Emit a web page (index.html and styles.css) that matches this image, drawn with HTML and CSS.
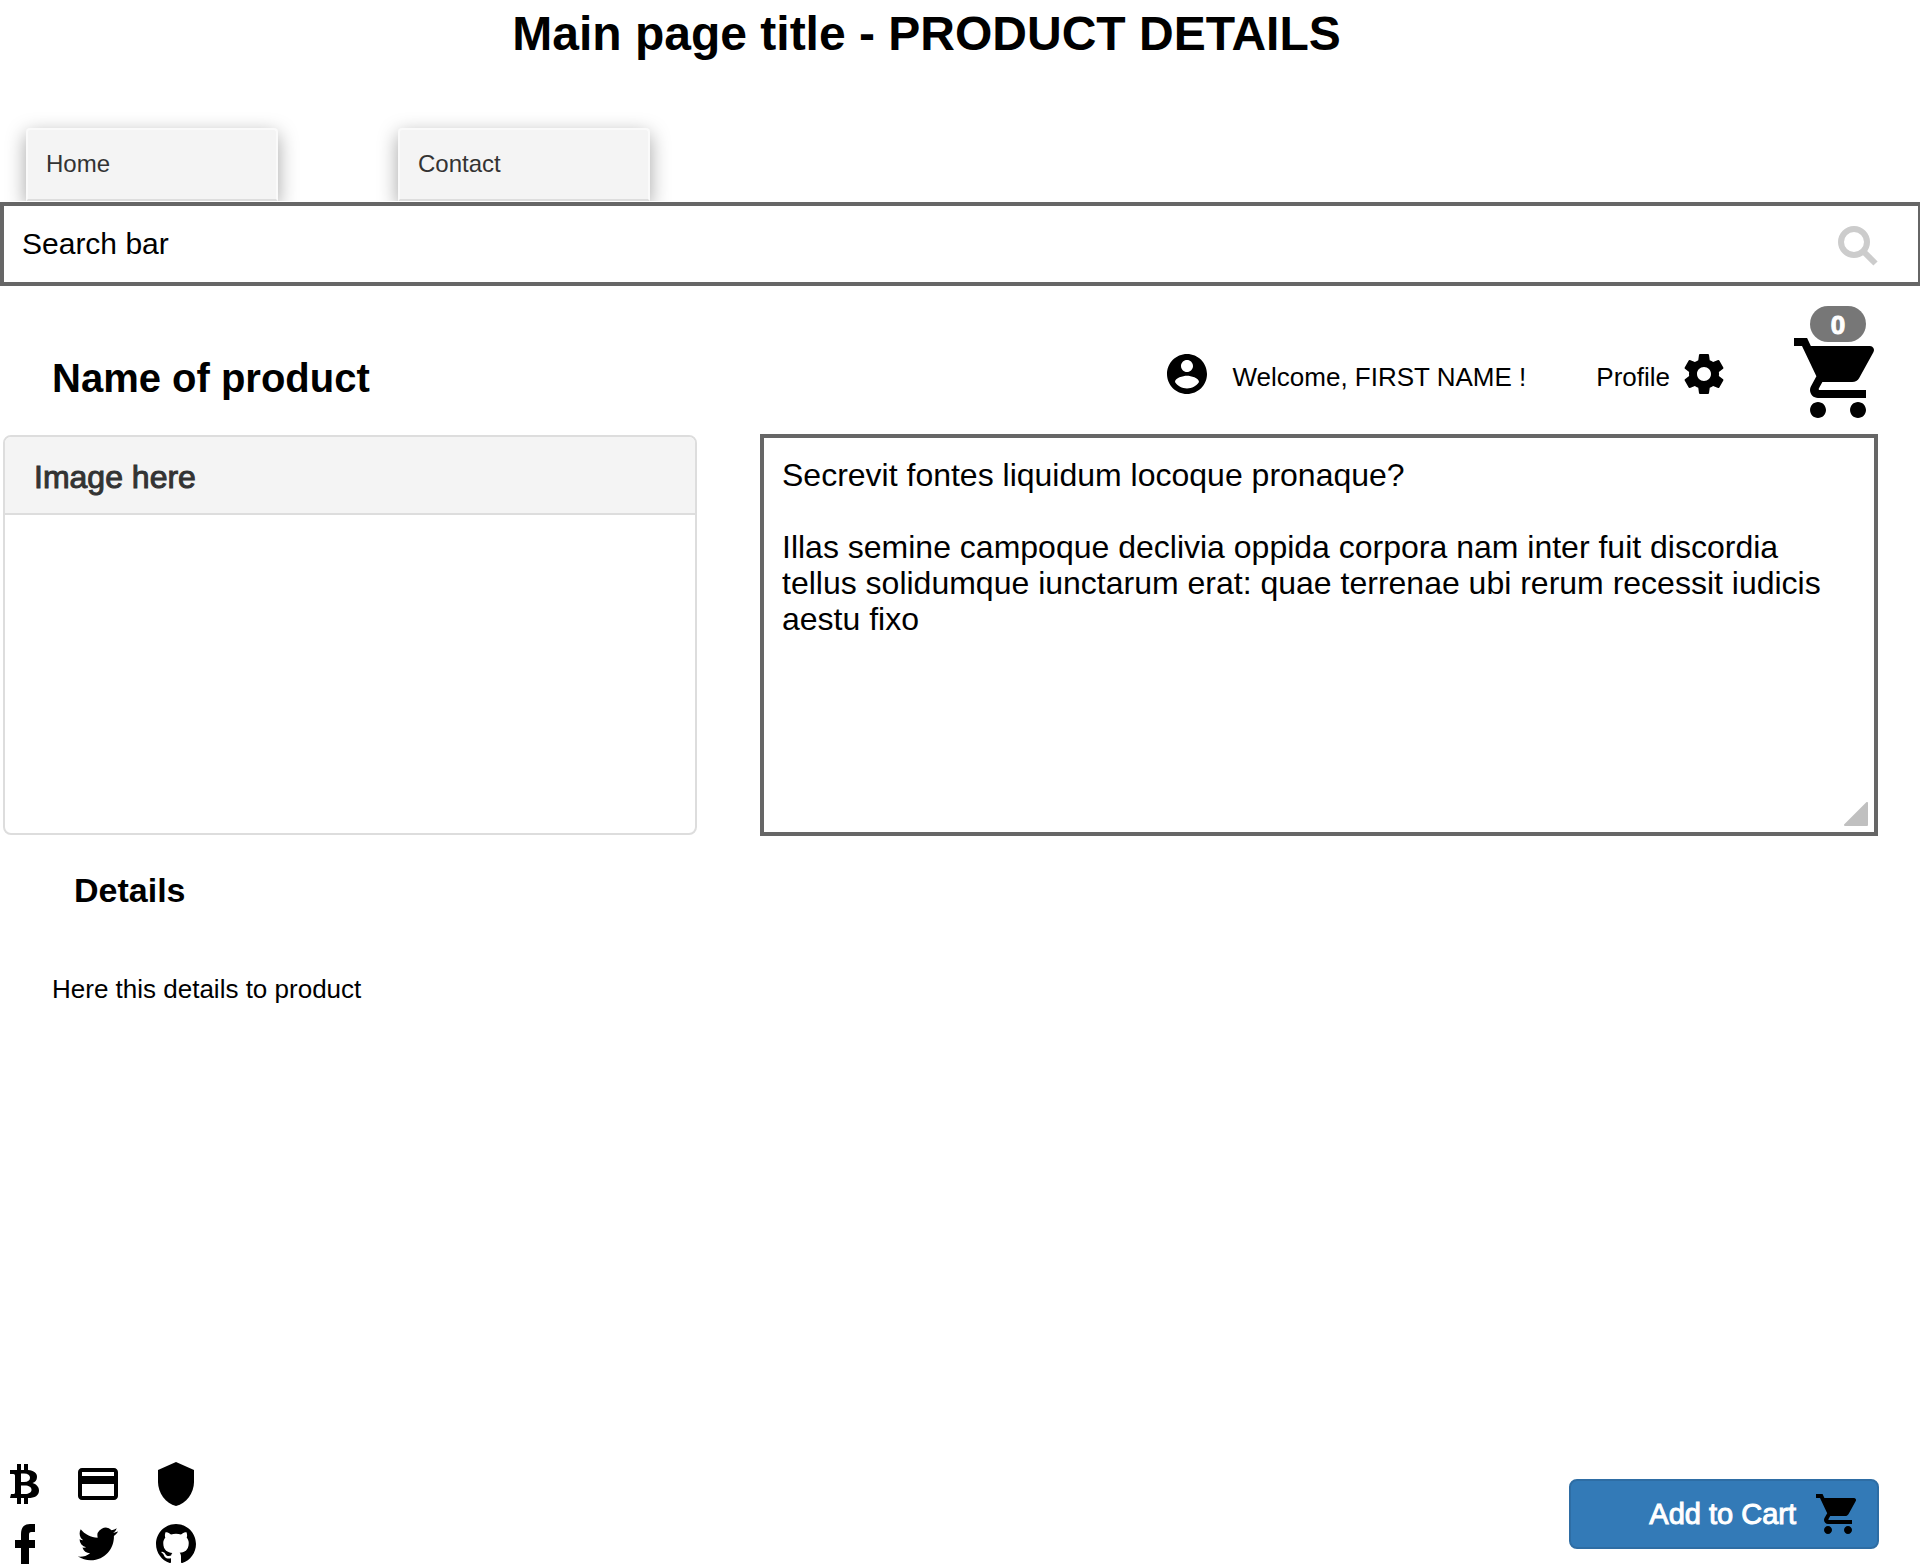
FILE: index.html
```html
<!DOCTYPE html>
<html lang="en">
<head>
  <meta charset="utf-8">
  <meta name="viewport" content="width=device-width, initial-scale=1">
  <title>Product details</title>
  <link rel="stylesheet" href="styles.css">
</head>
<body>
  <svg class="sprite" aria-hidden="true">
    <symbol id="cart" viewBox="0 0 24 24"><path d="M7 18c-1.1 0-1.99.9-1.99 2S5.9 22 7 22s2-.9 2-2-.9-2-2-2zM1 2v2h2l3.6 7.59-1.35 2.45c-.16.28-.25.61-.25.96 0 1.1.9 2 2 2h12v-2H7.42c-.14 0-.25-.11-.25-.25l.03-.12.9-1.63h7.45c.75 0 1.41-.41 1.75-1.03l3.58-6.49A1.003 1.003 0 0 0 20 4H5.21l-.94-2H1zm16 16c-1.1 0-1.99.9-1.99 2s.89 2 1.99 2 2-.9 2-2-.9-2-2-2z"/></symbol>
  </svg>

  <h1 class="page-title">Main page title - PRODUCT DETAILS</h1>

  <nav class="tabs">
    <a class="tab" href="#home">Home</a>
    <a class="tab" href="#contact">Contact</a>
  </nav>

  <form class="search" role="search">
    <input class="search-input" type="text" aria-label="Search" value="Search bar">
    <button class="search-button" type="button" aria-label="Search">
      <svg class="search-icon" viewBox="0 0 40 40"><circle cx="16" cy="16" r="13"/><path d="M25 25 37.500 37.500"/></svg>
    </button>
  </form>

  <main class="content">
    <header class="product-header">
      <h2 class="product-name">Name of product</h2>
      <div class="account">
        <svg class="icon" viewBox="0 0 24 24" aria-hidden="true"><path d="M12 2C6.480 2 2 6.480 2 12s4.480 10 10 10 10-4.480 10-10S17.520 2 12 2zm0 3c1.660 0 3 1.340 3 3s-1.340 3-3 3-3-1.340-3-3 1.340-3 3-3zm0 14.200c-2.500 0-4.710-1.280-6-3.220.03-1.990 4-3.080 6-3.080 1.990 0 5.970 1.090 6 3.080-1.290 1.940-3.500 3.220-6 3.220z"/></svg>
        <span class="account-label">Welcome, FIRST NAME !</span>
      </div>
      <a class="profile" href="#profile">
        <span class="account-label">Profile</span>
        <svg class="icon" viewBox="0 0 24 24" aria-hidden="true"><path d="M19.430 12.980c.04-.32.07-.64.07-.98s-.03-.66-.07-.98l2.110-1.650c.19-.15.24-.42.12-.64l-2-3.460c-.12-.22-.39-.3-.61-.22l-2.490 1c-.52-.4-1.080-.73-1.690-.98l-.38-2.650C14.460 2.180 14.250 2 14 2h-4c-.25 0-.46.18-.49.42l-.38 2.650c-.61.25-1.170.59-1.690.98l-2.490-1c-.23-.09-.49 0-.61.22l-2 3.460c-.13.22-.07.49.12.64l2.110 1.650c-.04.32-.07.65-.07.98s.03.66.07.98l-2.110 1.650c-.19.15-.24.42-.12.64l2 3.460c.12.22.39.3.61.22l2.490-1c.52.4 1.080.73 1.690.98l.38 2.650c.03.24.24.42.49.42h4c.25 0 .46-.18.49-.42l.38-2.650c.61-.25 1.170-.59 1.690-.98l2.490 1c.23.09.49 0 .61-.22l2-3.460c.12-.22.07-.49-.12-.64l-2.110-1.650zM12 15.500c-1.930 0-3.500-1.570-3.500-3.500s1.570-3.500 3.500-3.500 3.500 1.570 3.500 3.500-1.570 3.500-3.500 3.500z"/></svg>
      </a>
      <a class="cart" href="#cart-page" aria-label="Cart">
        <svg class="cart-icon"><use href="#cart"/></svg>
        <span class="badge">0</span>
      </a>
    </header>

    <section class="product">
      <div class="panel">
        <h3 class="panel-title">Image here</h3>
      </div>
      <div class="description">
        <textarea class="description-text" aria-label="Description">Secrevit fontes liquidum locoque pronaque?

Illas semine campoque declivia oppida corpora nam inter fuit discordia tellus solidumque iunctarum erat: quae terrenae ubi rerum recessit iudicis aestu fixo</textarea>
        <svg class="grip" viewBox="0 0 24 24" aria-hidden="true"><path d="M1 23 23 1V23Z"/></svg>
      </div>
    </section>

    <section class="details">
      <h3 class="details-title">Details</h3>
      <p class="details-text">Here this details to product</p>
    </section>
  </main>

  <footer class="footer">
    <div class="links">
      <a class="link" href="#bitcoin" aria-label="Bitcoin"><svg class="glyph" viewBox="0 0 29 40"><path fill-rule="evenodd" d="M7 0h4v6h3V0h4v6c6 .5 9 3 9 7 0 3.500-2 5-4.500 6 3.500 1 6.500 3.500 6.500 7.500 0 5-4 7.500-11 7.500v6h-4v-6h-3v6H7v-6H0l1-4h2.500Q5 30 5 28.500v-17Q5 10 3.500 10H0V6h7zM11 9.500v8.500h3c4 0 6-1.500 6-4.200s-2-4.300-6-4.300zM11 21.500v8.500h4c4 0 6.500-1.500 6.500-4.200s-2.500-4.300-6.500-4.300z"/></svg></a>
      <a class="link" href="#card" aria-label="Credit card"><svg class="icon" viewBox="0 0 24 24"><path d="M20 4H4c-1.110 0-1.990.89-1.990 2L2 18c0 1.110.89 2 2 2h16c1.110 0 2-.89 2-2V6c0-1.110-.89-2-2-2zm0 14H4v-6h16v6zm0-10H4V6h16v2z"/></svg></a>
      <a class="link" href="#security" aria-label="Security"><svg class="icon" viewBox="0 0 24 24"><path d="M12 1L3 5v6c0 5.550 3.840 10.740 9 12 5.160-1.260 9-6.450 9-12V5l-9-4z"/></svg></a>
      <a class="link" href="#facebook" aria-label="Facebook"><svg class="glyph" viewBox="0 0 20 40"><path d="M20 0v8h-3.500C14.400 8 14 9 14 11v5h6v8h-6v16H6V24H0v-8h6v-6C6 3.500 9 0 15 0z"/></svg></a>
      <a class="link" href="#twitter" aria-label="Twitter"><svg class="glyph" viewBox="0 0 24 24"><path d="M23.953 4.570a10 10 0 0 1-2.825.775 4.958 4.958 0 0 0 2.163-2.723c-.951.555-2.005.959-3.127 1.184a4.920 4.920 0 0 0-8.384 4.482C7.690 8.095 4.067 6.130 1.640 3.162a4.822 4.822 0 0 0-.666 2.475c0 1.710.87 3.213 2.188 4.096a4.904 4.904 0 0 1-2.228-.616v.06a4.923 4.923 0 0 0 3.946 4.827 4.996 4.996 0 0 1-2.212.085 4.936 4.936 0 0 0 4.604 3.417 9.867 9.867 0 0 1-6.102 2.105c-.39 0-.779-.023-1.170-.067a13.995 13.995 0 0 0 7.557 2.209c9.053 0 13.998-7.496 13.998-13.985 0-.21 0-.42-.015-.63A9.935 9.935 0 0 0 24 4.590z"/></svg></a>
      <a class="link" href="#github" aria-label="GitHub"><svg class="glyph" viewBox="70 70 372 372"><path d="M256 70.700c-102.600 0-185.900 83.200-185.900 185.900 0 82.100 53.300 151.800 127.100 176.400 9.300 1.700 12.300-4 12.300-8.900V389.400c-51.700 11.300-62.500-21.900-62.500-21.900-8.400-21.500-20.600-27.200-20.600-27.200-16.900-11.500 1.300-11.300 1.300-11.300 18.700 1.300 28.500 19.200 28.500 19.200 16.600 28.400 43.500 20.200 54.100 15.400 1.700-12 6.500-20.200 11.800-24.900-41.300-4.700-84.700-20.600-84.700-91.900 0-20.300 7.300-36.900 19.200-49.900-1.900-4.700-8.300-23.600 1.800-49.200 0 0 15.600-5 51.100 19.100 14.800-4.100 30.700-6.200 46.500-6.300 15.800.1 31.700 2.100 46.600 6.300 35.500-24 51.100-19.100 51.100-19.100 10.100 25.600 3.800 44.500 1.800 49.200 11.900 13 19.100 29.600 19.100 49.900 0 71.400-43.500 87.100-84.900 91.700 6.700 5.800 12.800 17.100 12.800 34.400 0 24.900 0 44.900 0 51 0 4.900 3 10.700 12.400 8.900 73.800-24.600 127-94.300 127-176.400C441.900 153.900 358.600 70.700 256 70.700z"/></svg></a>
    </div>
    <button class="add-button" type="button">
      <span class="add-label">Add to Cart</span>
      <svg class="icon" aria-hidden="true"><use href="#cart"/></svg>
    </button>
  </footer>
</body>
</html>
```

FILE: styles.css
```css
* {
  box-sizing: border-box;
}

body {
  margin: 0;
  min-height: 100vh;
  display: flex;
  flex-direction: column;
  background: #fff;
  color: #000;
  font-family: "Liberation Sans", Arial, Helvetica, sans-serif;
  font-size: 26px;
  line-height: 30px;
}

h1, h2, h3, p {
  margin: 0;
}

a {
  color: inherit;
  text-decoration: none;
}

svg {
  display: block;
  flex: none;
  fill: #000;
}

.sprite {
  position: absolute;
  width: 0;
  height: 0;
}

.icon {
  width: 48px;
  height: 48px;
}

/* Title and navigation */
.page-title {
  padding: 6px 67px 0 0;
  font-size: 48px;
  line-height: 56px;
  text-align: center;
}

.tabs {
  display: flex;
  gap: 120px;
  padding: 66px 26px 0;
  overflow: hidden;
}

.tab {
  width: 252px;
  height: 73px;
  padding: 19px 18px;
  border: 2px solid #fafafa;
  border-bottom-color: #ddd;
  border-radius: 4px 4px 0 0;
  background: #f4f4f4;
  box-shadow: 0 6px 20px rgba(0, 0, 0, 0.36);
  color: #333;
  font-size: 24px;
}

/* Search */
.search {
  display: flex;
  align-items: center;
  height: 84px;
  margin-top: 1px;
  padding-right: 40px;
  border: 4px solid #666;
  border-right-width: 2px;
}

.search-input {
  flex: 1;
  min-width: 0;
  padding: 0 18px;
  border: 0;
  outline: 0;
  background: none;
  color: #000;
  font: 30px "Liberation Sans", Arial, Helvetica, sans-serif;
}

.search-button {
  padding: 4px 0 0;
  border: 0;
  background: none;
}

.search-icon {
  width: 40px;
  height: 40px;
  fill: none;
  stroke: #ccc;
  stroke-width: 6;
}

/* Product header */
.content {
  flex: 1;
}

.product-header {
  display: flex;
  align-items: center;
  padding: 44px 34px 8px 52px;
}

.product-name {
  font-size: 40px;
  line-height: 48px;
  margin-right: auto;
}

.account,
.profile {
  display: flex;
  align-items: center;
  height: 56px;
  padding-bottom: 8px;
}

.account {
  gap: 22px;
  margin-right: 70px;
}

.profile {
  gap: 10px;
  margin-right: 62px;
}

.account-label {
  padding-top: 6px;
}

.cart {
  position: relative;
}

.cart-icon {
  width: 96px;
  height: 96px;
}

.badge {
  position: absolute;
  top: -24px;
  left: 20px;
  width: 56px;
  height: 36px;
  border-radius: 20px;
  background: #777;
  color: #fff;
  font-size: 26px;
  font-weight: bold;
  line-height: 38px;
  text-align: center;
  -webkit-text-stroke: 1px #fff;
}

/* Picture panel and description */
.product {
  display: grid;
  grid-template-columns: 694fr 1118fr;
  gap: 63px;
  padding: 0 42px 0 3px;
}

.panel {
  margin: 1px 0;
  border: 2px solid #ddd;
  border-radius: 8px;
  overflow: hidden;
}

.panel-title {
  padding: 20px 29px 16px;
  border-bottom: 2px solid #ddd;
  background: #f4f4f4;
  color: #333;
  font-size: 32px;
  font-weight: normal;
  line-height: 40px;
  -webkit-text-stroke: 1px #333;
}

.description {
  position: relative;
}

.description-text {
  display: block;
  width: 100%;
  height: 402px;
  padding: 19px 18px;
  border: 4px solid #666;
  border-radius: 0;
  outline: 0;
  overflow: hidden;
  resize: none;
  background: #fff;
  color: #000;
  font: 32px/36px "Liberation Sans", Arial, Helvetica, sans-serif;
}

.grip {
  position: absolute;
  right: 10px;
  bottom: 10px;
  width: 24px;
  height: 24px;
  fill: #c0c0c0;
  stroke: #c0c0c0;
  stroke-width: 2;
  stroke-linejoin: round;
}

/* Details */
.details {
  padding: 34px 52px;
}

.details-title {
  padding-left: 22px;
  font-size: 34px;
  line-height: 40px;
}

.details-text {
  margin-top: 64px;
}

/* Footer */
.footer {
  display: flex;
  justify-content: space-between;
  align-items: flex-end;
}

.links {
  display: grid;
  grid-template-columns: 49px 98px 57px;
  grid-auto-rows: 48px;
  row-gap: 12px;
}

.link {
  display: flex;
  align-items: center;
  justify-content: center;
}

.glyph {
  height: 40px;
}

.add-button {
  display: flex;
  align-items: center;
  justify-content: flex-end;
  gap: 18px;
  width: 310px;
  height: 70px;
  margin: 0 41px 19px 0;
  padding: 0 15px;
  border: 2px solid #2e6da4;
  border-radius: 8px;
  background: #337ab7;
  color: #fff;
  font: 29px "Liberation Sans", Arial, Helvetica, sans-serif;
}

.add-label {
  -webkit-text-stroke: 1px #fff;
}
```
